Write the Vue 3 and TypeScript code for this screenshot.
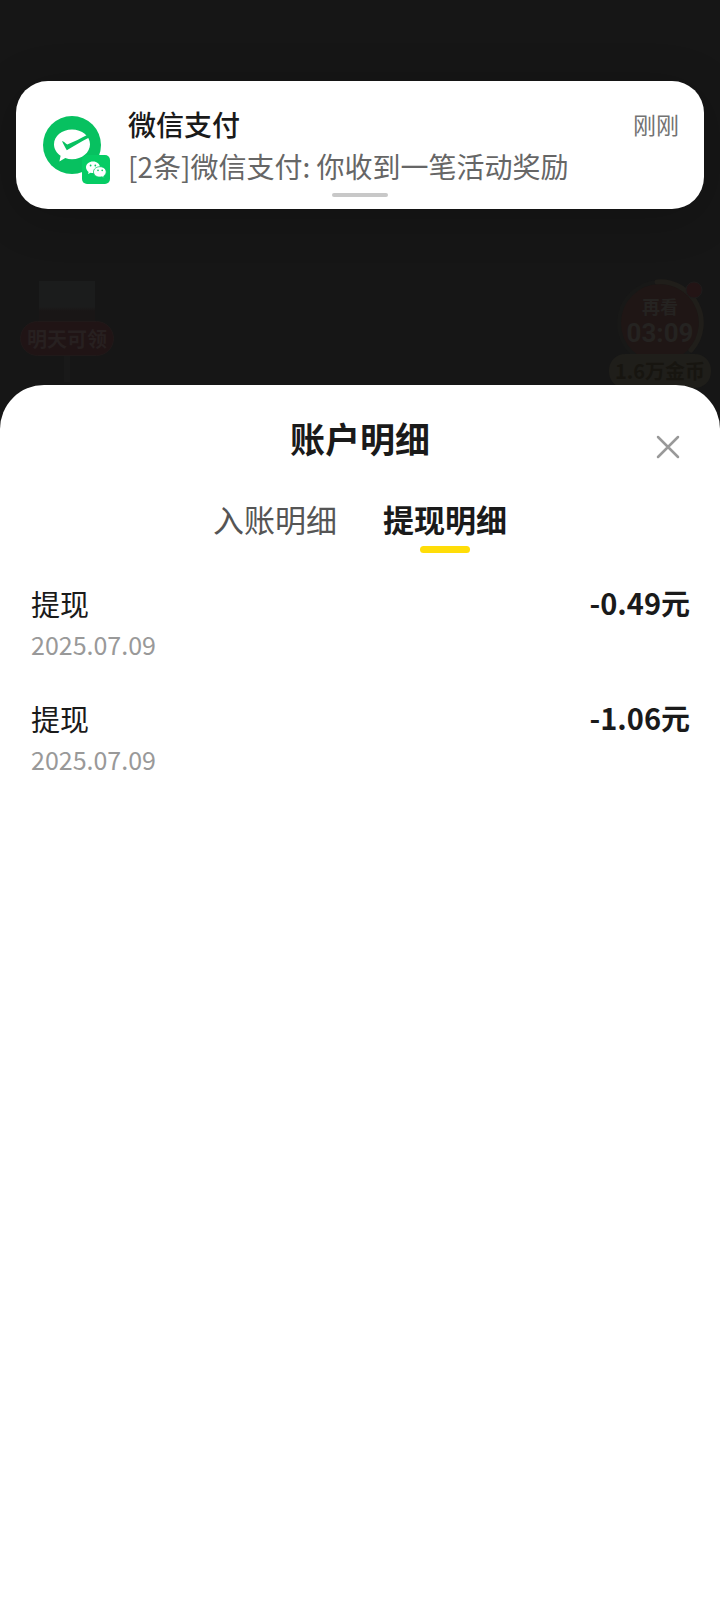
<script setup lang="ts">
import { computed, ref } from 'vue'

type TabKey = 'income' | 'withdraw'

interface Entry {
  id: number
  name: string
  date: string
  amount: string
}

const tabs: { key: TabKey; label: string }[] = [
  { key: 'income', label: '入账明细' },
  { key: 'withdraw', label: '提现明细' },
]

const entries: Record<TabKey, Entry[]> = {
  income: [],
  withdraw: [
    { id: 1, name: '提现', date: '2025.07.09', amount: '-0.49元' },
    { id: 2, name: '提现', date: '2025.07.09', amount: '-1.06元' },
  ],
}

const active = ref<TabKey>('withdraw')
const open = ref(true)
const rows = computed(() => entries[active.value])
</script>

<template>
  <main class="page">
    <section class="stage">
      <article class="notice">
        <div class="avatar">
          <svg class="avatar-main" viewBox="0 0 58 58" aria-hidden="true">
            <circle cx="29" cy="29" r="29" fill="#07c160" />
            <path
              d="M29 13.500C19 13.500 11 20 11 28.300c0 4.700 2.600 8.800 6.600 11.500l-1.200 5.700 5.900-3.400c2.100.8 4.300 1.200 6.700 1.200 10 0 18-6.700 18-15S39 13.500 29 13.500z"
              fill="#fff"
            />
            <path
              d="M19 25c1.600.2 3.200 2.300 5.300 3.400C31 26 38 22.200 44.600 18.800l1.600 2.600C38.500 25.300 31 30 23.800 34.200c-1.200-2.400-3.800-6.500-4.800-9.200z"
              fill="#07c160"
            />
          </svg>
          <svg class="avatar-badge" viewBox="0 0 28 29" aria-hidden="true">
            <rect width="28" height="29" rx="5" fill="#06cc64" />
            <path
              d="M11 6.500c-4 0-7 2.600-7 5.800 0 1.900 1 3.500 2.600 4.600L6 19l2.600-1.300c.8.2 1.600.3 2.400.3 4 0 7-2.500 7-5.700s-3-5.800-7-5.800z"
              fill="#fff"
            />
            <path
              d="M18 11.700c-3.700 0-6.500 2.300-6.500 5.200s2.800 5.200 6.500 5.200c.7 0 1.400-.1 2-.3l2.200 1.100-.5-1.900c1.500-.9 2.500-2.400 2.500-4.100 0-2.900-2.700-5.200-6.200-5.200z"
              fill="#fff"
              stroke="#06cc64"
              stroke-width=".8"
            />
            <g fill="#06c964">
              <circle cx="8.600" cy="10.500" r=".9" />
              <circle cx="13.300" cy="10.500" r=".9" />
              <circle cx="16" cy="15.400" r=".8" />
              <circle cx="20.200" cy="15.400" r=".8" />
            </g>
          </svg>
        </div>
        <div class="notice-text">
          <header class="notice-head">
            <h2>微信支付</h2>
            <time>刚刚</time>
          </header>
          <p>[2条]微信支付: 你收到一笔活动奖励</p>
        </div>
        <span class="handle"></span>
      </article>

      <div class="widgets" inert>
        <div class="gift">
          <span class="gift-box"></span>
          <span class="gift-label">明天可领</span>
          <span class="gift-stem"></span>
        </div>
        <div class="timer">
          <div class="dial">
            <svg class="dial-ring" viewBox="0 0 90 90" aria-hidden="true">
              <circle cx="45" cy="45" r="41" fill="#1f1615" stroke="#181817" stroke-width="4" />
              <path d="M42 4a41 41 0 0 1 34 68" fill="none" stroke="#201e1a" stroke-width="5" stroke-linecap="round" />
              <circle cx="79" cy="12" r="8" fill="#231415" stroke="#1e1c1c" stroke-width="1" />
            </svg>
            <span class="dial-caption">再看</span>
            <span class="dial-time">03:09</span>
          </div>
          <span class="coins">1.6万金币</span>
        </div>
      </div>
    </section>

    <section v-if="open" class="sheet" role="dialog" aria-labelledby="sheet-title">
      <header class="sheet-head">
        <h1 id="sheet-title">账户明细</h1>
        <button class="close" type="button" aria-label="关闭" @click="open = false">
          <svg viewBox="0 0 24 24" aria-hidden="true">
            <path d="M2 2l20 20M22 2L2 22" fill="none" stroke="#999" stroke-width="2.500" stroke-linecap="round" />
          </svg>
        </button>
      </header>

      <div class="tabs" role="tablist">
        <button
          v-for="tab in tabs"
          :key="tab.key"
          class="tab"
          :class="{ 'tab-active': tab.key === active }"
          type="button"
          role="tab"
          :aria-selected="tab.key === active"
          @click="active = tab.key"
        >
          {{ tab.label }}
        </button>
      </div>

      <ul class="list">
        <li v-for="row in rows" :key="row.id" class="entry">
          <div class="entry-info">
            <span class="entry-name">{{ row.name }}</span>
            <time class="entry-date">{{ row.date }}</time>
          </div>
          <strong class="entry-amount">{{ row.amount }}</strong>
        </li>
      </ul>
    </section>
  </main>
</template>

<style>
body {
  margin: 0;
  background: #161616;
}
</style>

<style scoped>
.page {
  display: flex;
  flex-direction: column;
  min-height: 100vh;
  background: #161616;
  color: #1a1a1a;
  font-family: 'Noto Sans CJK SC', 'Noto Sans', sans-serif;
}

h1,
h2,
p,
ul {
  margin: 0;
  padding: 0;
}

button {
  padding: 0;
  border: 0;
  background: none;
  color: inherit;
  font: inherit;
  cursor: pointer;
}

.stage {
  padding: 81px 16px 0;
}

.notice {
  position: relative;
  display: flex;
  gap: 17px;
  padding: 22px 25px 22px 27px;
  border-radius: 32px;
  background: #fff;
  box-shadow: 0 8px 48px rgba(0, 0, 0, 0.2);
}

.avatar {
  position: relative;
  flex: none;
  width: 68px;
  height: 68px;
  margin-top: 13px;
}

.avatar-main {
  display: block;
  width: 58px;
  height: 58px;
}

.avatar-badge {
  position: absolute;
  right: 1px;
  bottom: 0;
  width: 28px;
  height: 29px;
}

.notice-text {
  flex: 1;
  min-width: 0;
}

.notice-head {
  display: flex;
  justify-content: space-between;
  align-items: center;
}

.notice-head h2 {
  font-size: 28px;
  line-height: 42px;
  font-weight: 500;
}

.notice-head time {
  color: #737373;
  font-size: 23px;
  line-height: 42px;
}

.notice-text p {
  color: #666;
  font-size: 28px;
  line-height: 42px;
  white-space: nowrap;
  overflow: hidden;
  text-overflow: ellipsis;
}

.handle {
  position: absolute;
  left: 50%;
  bottom: 12px;
  width: 56px;
  height: 4px;
  border-radius: 2px;
  background: #c8c8c8;
  transform: translateX(-50%);
}

.widgets {
  display: flex;
  justify-content: space-between;
  height: 107px;
  margin: 69px -7px 0 4px;
}

.gift {
  display: flex;
  flex-direction: column;
  align-items: center;
  padding-top: 3px;
}

.gift-box {
  width: 56px;
  height: 40px;
  background: linear-gradient(#1b1c1c 26px, #191616 30px);
}

.gift-label {
  box-sizing: border-box;
  width: 94px;
  border: 1px solid #201919;
  border-radius: 18px;
  background: #201415;
  color: #272020;
  font-size: 20px;
  line-height: 33px;
  font-weight: 700;
  text-align: center;
}

.gift-stem {
  width: 6px;
  height: 26px;
  background: #191919;
}

.timer {
  display: flex;
  flex-direction: column;
  align-items: center;
  width: 102px;
}

.dial {
  position: relative;
  display: flex;
  flex: none;
  flex-direction: column;
  align-items: center;
  box-sizing: border-box;
  width: 90px;
  height: 76px;
  padding-top: 16px;
  font-weight: 700;
}

.dial-ring {
  position: absolute;
  top: 0;
  left: 0;
  width: 90px;
  height: 90px;
}

.dial-caption,
.dial-time {
  position: relative;
  color: #252321;
}

.dial-caption {
  font-size: 18px;
  line-height: 24px;
}

.dial-time {
  font-family: Roboto, 'Noto Sans CJK SC', sans-serif;
  font-size: 26px;
  line-height: 30px;
}

.coins {
  position: relative;
  width: 102px;
  border-radius: 16px;
  background: #1f1e1a;
  color: #171510;
  font-size: 20px;
  line-height: 34px;
  font-weight: 700;
  text-align: center;
}

.sheet {
  position: relative;
  flex: 1;
  padding: 30px 30px 32px;
  border-radius: 44px 44px 0 0;
  background: #fff;
}

.sheet-head {
  position: relative;
  text-align: center;
}

.sheet-head h1 {
  font-size: 35px;
  line-height: 46px;
  font-weight: 700;
}

.close {
  position: absolute;
  top: 20px;
  right: 10px;
  width: 24px;
  height: 24px;
}

.close svg {
  display: block;
  width: 24px;
  height: 24px;
}

.tabs {
  display: flex;
  justify-content: center;
  gap: 46px;
  margin-top: 35px;
}

.tab {
  display: flex;
  flex-direction: column;
  align-items: center;
  gap: 4px;
  color: #555;
  font-size: 31px;
  line-height: 46px;
}

.tab::after {
  content: '';
  width: 50px;
  height: 7px;
  border-radius: 4px;
}

.tab-active {
  color: #1a1a1a;
  font-weight: 700;
}

.tab-active::after {
  background: #ffdd08;
}

.list {
  margin-top: 30px;
  list-style: none;
}

.entry {
  display: flex;
  justify-content: space-between;
  align-items: flex-start;
  padding-bottom: 34px;
}

.entry-info {
  display: flex;
  flex-direction: column;
  padding-left: 1px;
}

.entry-name {
  font-size: 29px;
  line-height: 41px;
}

.entry-date {
  color: #999;
  font-size: 25px;
  line-height: 40px;
}

.entry-amount {
  font-size: 29px;
  line-height: 38px;
  font-weight: 700;
}
</style>
